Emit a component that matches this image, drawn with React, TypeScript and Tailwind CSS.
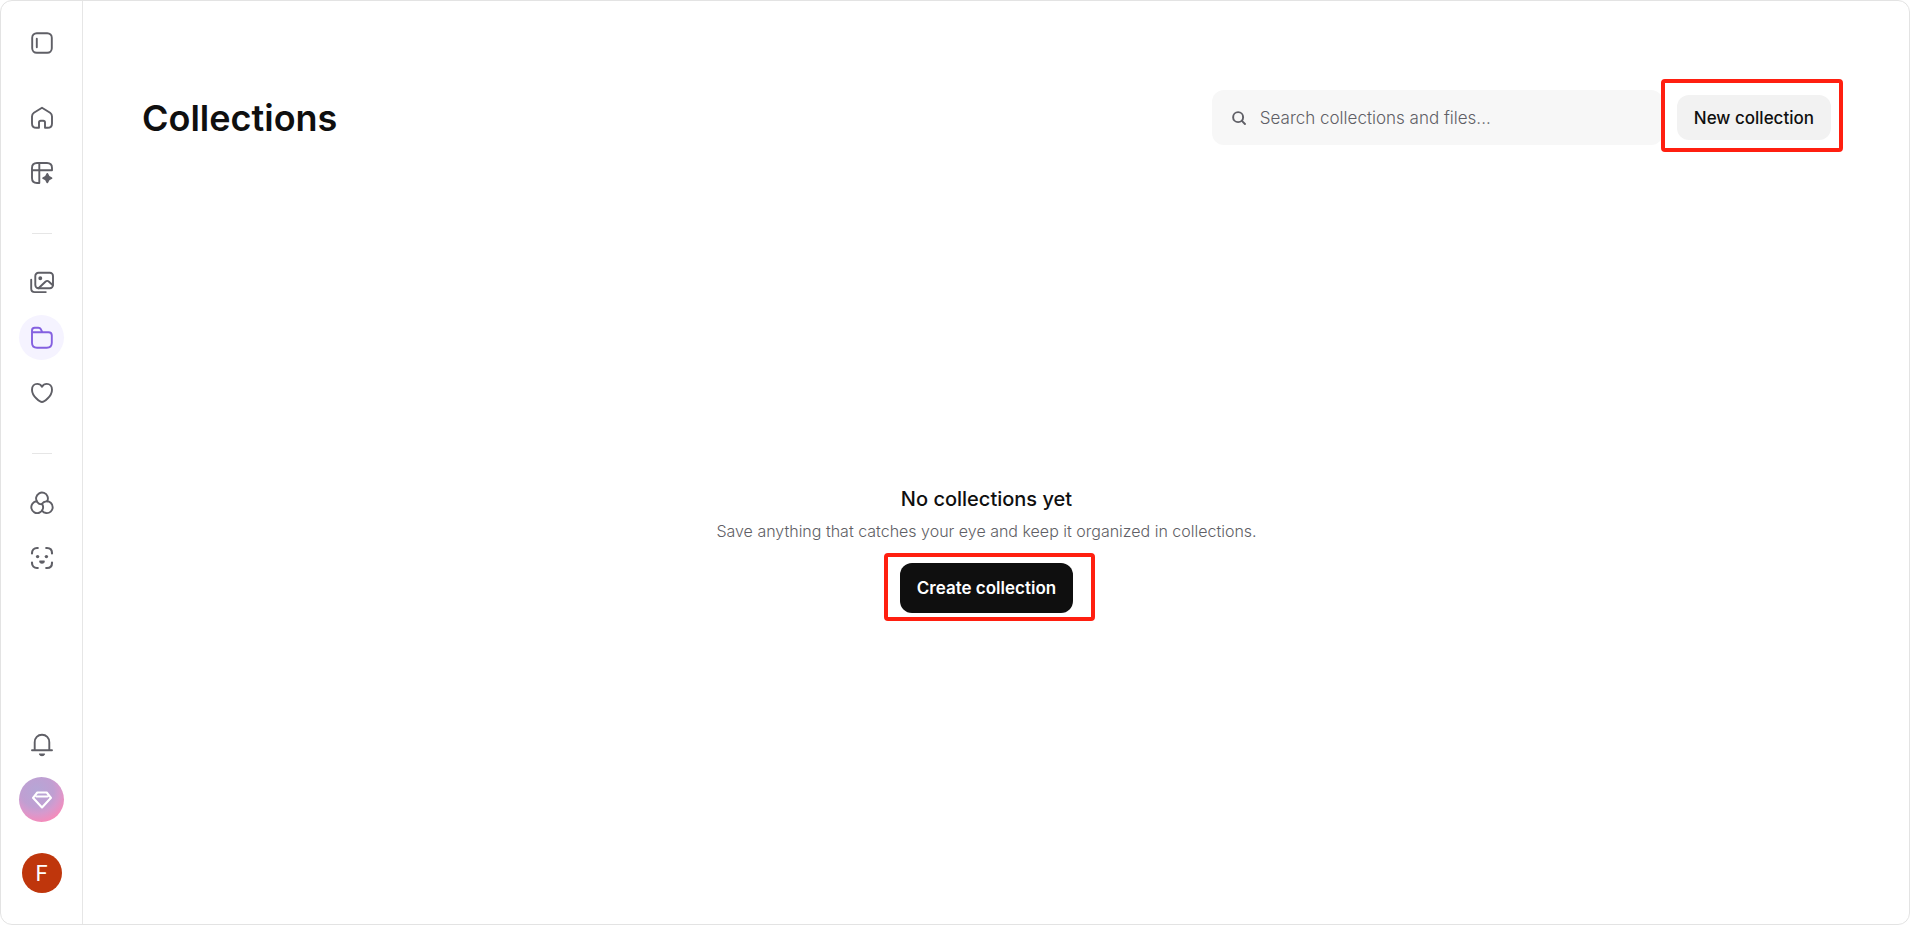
import type { ReactNode } from 'react'

type NavItem = {
  label: string
  icon: ReactNode
  active?: boolean
}

function Icon({ children }: { children: ReactNode }) {
  return (
    <svg
      viewBox="0 0 24 24"
      className="size-6"
      fill="none"
      stroke="currentColor"
      strokeWidth="1.9"
      strokeLinecap="round"
      strokeLinejoin="round"
      aria-hidden="true"
    >
      {children}
    </svg>
  )
}

function PanelIcon() {
  return (
    <Icon>
      <rect x="2.2" y="2.2" width="19.6" height="19.6" rx="4.5" />
      <path d="M6.8 7.7v8.6" />
    </Icon>
  )
}

function HomeIcon() {
  return (
    <Icon>
      <path d="M9 21.8v-5.3c0-1.2.6-1.8 1.8-1.8h2.4c1.2 0 1.8.6 1.8 1.8v5.3h2.6c2.8 0 4.4-1.6 4.4-4.4v-6.9c0-1.7-.5-2.7-1.9-3.7L12 1.7 3.9 6.8C2.5 7.800 2 8.800 2 10.500v6.900c0 2.800 1.600 4.400 4.400 4.400H9Z" />
    </Icon>
  )
}

function TableSparkIcon() {
  return (
    <Icon>
      <path d="M22 9.300V7c0-3.300-1.700-5-5-5H7C3.700 2 2 3.700 2 7v10c0 3.300 1.700 5 5 5h2.300V2M2 9.300h20" />
      <path
        d="M17.300 13c.6 2.700 1.300 3.400 4.100 4.200-2.800.8-3.500 1.500-4.100 4.200-.6-2.700-1.300-3.400-4.100-4.200 2.800-.8 3.500-1.500 4.100-4.200Z"
        fill="currentColor"
      />
    </Icon>
  )
}

function ImagesIcon() {
  return (
    <Icon>
      <rect x="5.3" y="1.8" width="17.7" height="15.5" rx="3.2" />
      <path d="m8.500 17.200 6.900-6.500c1.200-1.100 2.400-1.100 3.600 0l3.800 3.500M1.200 8.800v8.700c0 2.500 1.100 3.600 3.600 3.600h11" />
      <circle cx="10.3" cy="7.3" r="1" fill="currentColor" />
    </Icon>
  )
}

function FolderIcon() {
  return (
    <Icon>
      <path d="M2 6.200h16.500c2.300 0 3.300 1 3.300 3.300v7.200c0 3.200-1.800 5-5 5H7c-3.200 0-5-1.800-5-5V4.500C2 2.700 2.900 1.800 4.700 1.800h3.600c1.300 0 2 .4 2.600 1.500l1.300 2.700" />
    </Icon>
  )
}

function HeartIcon() {
  return (
    <Icon>
      <path d="M12 21c-1.500 0-10-5.200-10-12.300C2 5.200 4.300 2.900 7.200 2.900c2.100 0 3.700 1 4.800 2.800 1.100-1.800 2.700-2.800 4.800-2.800 2.900 0 5.200 2.300 5.200 5.800C22 15.800 13.500 21 12 21Z" />
    </Icon>
  )
}

function CirclesIcon() {
  return (
    <Icon>
      <path d="M11.620 13.390A5.900 5.900 0 1 1 17.180 10.310" />
      <path d="M12 12.770A5.900 5.900 0 1 1 12 19.630" />
      <path d="M12.380 13.390A5.900 5.900 0 1 1 6.820 10.310" />
    </Icon>
  )
}

function FaceScanIcon() {
  return (
    <Icon>
      <path
        d="M2 7.500V7c0-3 2-5 5-5h.8M16.200 2h.8c3 0 5 2 5 5v.5M22 16.500v.5c0 3-2 5-5 5h-.8M7.800 22H7c-3 0-5-2-5-5v-.5"
        strokeWidth="2.1"
      />
      <path
        d="M9.800 15h4.400c0 1.300-.9 2.100-2.200 2.100S9.800 16.300 9.800 15Z"
        fill="currentColor"
        strokeWidth="1.2"
      />
      <circle cx="7.6" cy="10.6" r="1.7" fill="currentColor" stroke="none" />
      <circle cx="16.4" cy="10.6" r="1.7" fill="currentColor" stroke="none" />
    </Icon>
  )
}

function BellIcon() {
  return (
    <Icon>
      <path d="M2 17.200h20M4.700 17V9.300C4.700 5 7.700 1.800 12 1.800S19.300 5 19.300 9.300V17" />
      <path
        d="M9.500 21h5c-.4 1-1.300 1.600-2.500 1.600S9.900 22 9.500 21Z"
        fill="currentColor"
        strokeWidth="1.2"
      />
    </Icon>
  )
}

function GemIcon() {
  return (
    <svg
      viewBox="0 0 20 18"
      className="h-[18px] w-5"
      fill="none"
      stroke="currentColor"
      strokeWidth="2.1"
      strokeLinejoin="round"
      strokeLinecap="round"
      aria-hidden="true"
    >
      <path d="M5.300 1.500h9.400L19 6.800 10 16.500 1 6.800ZM4.500 5.500h11" />
    </svg>
  )
}

const groups: NavItem[][] = [
  [
    { label: 'Home', icon: <HomeIcon /> },
    { label: 'Tools', icon: <TableSparkIcon /> },
  ],
  [
    { label: 'Gallery', icon: <ImagesIcon /> },
    { label: 'Collections', icon: <FolderIcon />, active: true },
    { label: 'Favorites', icon: <HeartIcon /> },
  ],
  [
    { label: 'Styles', icon: <CirclesIcon /> },
    { label: 'Characters', icon: <FaceScanIcon /> },
  ],
]

function NavLink({ label, icon, active }: NavItem) {
  return (
    <a
      href="#"
      aria-label={label}
      className={
        active
          ? 'flex size-[45px] items-center justify-center rounded-full bg-[#f5f3ff] text-[#8460e0]'
          : 'flex size-[45px] items-center justify-center rounded-full text-[#5f5f66]'
      }
    >
      {icon}
    </a>
  )
}

function Sidebar() {
  return (
    <aside className="flex w-[82px] shrink-0 flex-col items-center border-r border-[#e6e6e6] pt-[19px] pb-[31px]">
      <button
        type="button"
        aria-label="Toggle sidebar"
        className="flex size-[45px] items-center justify-center text-[#5f5f66]"
      >
        <PanelIcon />
      </button>

      <nav className="mt-[30px] flex flex-col items-center">
        {groups.map((group, index) => (
          <div key={index} className="flex flex-col items-center">
            {index > 0 && <hr className="mt-[38px] mb-[26px] w-5 border-[#e6e6e6]" />}
            <div className="flex flex-col gap-2.5">
              {group.map((item) => (
                <NavLink key={item.label} {...item} />
              ))}
            </div>
          </div>
        ))}
      </nav>

      <div className="mt-auto flex flex-col items-center">
        <button
          type="button"
          aria-label="Notifications"
          className="flex size-[45px] items-center justify-center text-[#5f5f66]"
        >
          <BellIcon />
        </button>
        <button
          type="button"
          aria-label="Upgrade"
          className="mt-2.5 flex size-[45px] items-center justify-center rounded-full bg-[radial-gradient(circle_at_40%_30%,#b5a6d6_0%,#c09fd2_40%,#d59ace_55%,#ff86b4_85%)] text-white"
        >
          <GemIcon />
        </button>
        <button
          type="button"
          aria-label="Account"
          className="mt-[31px] flex size-10 items-center justify-center rounded-full bg-[#bf360c] font-[Roboto,sans-serif] text-[22px] text-white"
        >
          F
        </button>
      </div>
    </aside>
  )
}

function Highlight({ className }: { className: string }) {
  return (
    <span
      className={`pointer-events-none absolute rounded-[4px] border-4 border-[#ff1f10] ${className}`}
    />
  )
}

export default function App() {
  return (
    <div className="flex min-h-screen rounded-xl border border-[#e3e3e3] bg-white font-[Inter,sans-serif] text-[#0f0f0f]">
      <Sidebar />

      <main className="flex flex-1 flex-col pr-[78px] pl-[59px]">
        <header className="flex items-center justify-between pt-[89px]">
          <h1 className="text-4xl font-semibold">Collections</h1>

          <div className="flex items-center gap-3.5">
            <label className="flex h-[55px] w-[451px] items-center gap-3.5 rounded-xl bg-[#f7f7f7] px-5 text-[#5f5f66]">
              <svg
                viewBox="0 0 16 16"
                className="size-3.5"
                fill="none"
                stroke="currentColor"
                strokeWidth="2.2"
                strokeLinecap="round"
                aria-hidden="true"
              >
                <circle cx="7" cy="7" r="5.7" />
                <path d="m11.300 11.300 3.500 3.500" />
              </svg>
              <input
                type="search"
                aria-label="Search"
                placeholder="Search collections and files..."
                className="flex-1 bg-transparent pt-0.5 text-[17px] font-light outline-none placeholder:text-[#5f5f66]"
              />
            </label>

            <div className="relative">
              <button
                type="button"
                className="h-[45px] rounded-xl bg-[#f2f2f2] px-[17px] pt-0.5 text-[17px] font-medium"
              >
                New collection
              </button>
              <Highlight className="-top-4 -right-3 -bottom-3 -left-4" />
            </div>
          </div>
        </header>

        <section className="flex flex-1 flex-col items-center justify-center pt-7 text-center">
          <h2 className="text-xl font-medium">No collections yet</h2>
          <p className="mt-1.5 text-base font-light text-[#5f5f66]">
            Save anything that catches your eye and keep it organized in collections.
          </p>
          <div className="relative mt-5">
            <button
              type="button"
              className="h-[50px] rounded-xl bg-[#0f0f0f] px-[17px] pt-0.5 text-[17px] font-semibold text-white"
            >
              Create collection
            </button>
            <Highlight className="-top-2.5 -right-5.5 -bottom-2 -left-4" />
          </div>
        </section>
      </main>
    </div>
  )
}
